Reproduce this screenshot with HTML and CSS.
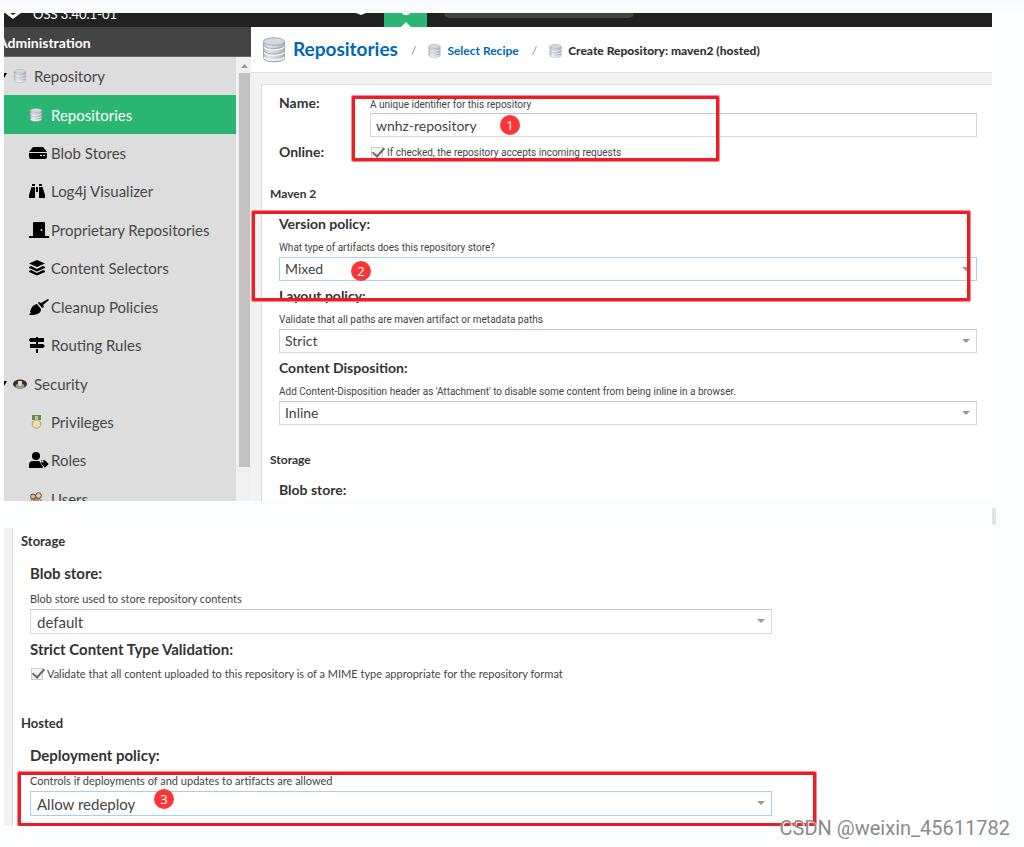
FILE: index.html
```html
<!DOCTYPE html>
<html lang="en">
<head>
<meta charset="utf-8">
<title>Create Repository: maven2 (hosted)</title>
<link rel="stylesheet" href="styles.css">
</head>
<body>
<svg class="sprite" aria-hidden="true">
  <defs>
    <linearGradient id="steel" x1="0" x2="1" y1="0" y2="0">
      <stop offset="0" stop-color="#b4b9c0"/><stop offset=".25" stop-color="#e6e9ed"/><stop offset=".6" stop-color="#ccd2d9"/><stop offset="1" stop-color="#a9afb7"/>
    </linearGradient>
    <symbol id="db" viewBox="0 0 24 26">
      <path d="M1.500 5v16c0 5 21 5 21 0V5z" fill="url(#steel)" stroke="#a0a5ac"/>
      <path d="M2 9.500c1 4 19 4 20 0M2 15c1 4 19 4 20 0M2 20c1 4 19 4 20 0" fill="none" stroke="#f6f8fa" stroke-width="1.500"/>
      <path d="M2 8.500c1 4 19 4 20 0M2 14c1 4 19 4 20 0" fill="none" stroke="#a0a6ae"/>
      <ellipse cx="12" cy="4.500" rx="10.500" ry="3.700" fill="#d5dae0" stroke="#a5aab1"/>
    </symbol>
  </defs>
</svg>
<main class="page">
  <section class="shot">
    <header class="topbar">
      <svg class="mark" viewBox="0 0 24 14"><path d="M0 -2 8 4 16 -2" transform="translate(1 0)" fill="none" stroke="#fff" stroke-width="3"/></svg>
      <span class="version">OSS 3.40.1-01</span>
      <svg class="cube" viewBox="0 0 12 14"><path d="M1 0 6 2 11 0z" fill="#fff"/></svg>
      <svg class="gear" viewBox="0 0 43 14"><path d="M0 0h43v14H0z" fill="#2bb573"/><path d="M18 0h8c-1 3-7 3-8 0M17 14l5-5 5 5z" fill="#fff"/></svg>
      <span class="search"></span>
    </header>
    <div class="columns">
      <aside class="sidebar">
        <h2 class="side-title">Administration</h2>
        <div class="tree-wrap">
          <ul class="tree">
            <li class="group"><svg class="caret" viewBox="0 0 4 6"><path d="M0 0h3L0 5z"/></svg><svg class="ico small"><use href="#db"/></svg><a href="#">Repository</a></li>
            <li class="selected"><svg class="ico small"><use href="#db"/></svg><a href="#">Repositories</a></li>
            <li><svg class="ico" viewBox="0 0 20 18"><path d="M4 3h10l4 5H0zM0 9h18v4q0 2-2 2H2q-2 0-2-2z"/><path d="M11 11h2v1h-2zM14 11h2v1h-2z" fill="#ddd"/></svg><a href="#">Blob Stores</a></li>
            <li><svg class="ico" viewBox="0 0 20 18"><path d="M3 2h3v2H3zM10 2h3v2h-3zM2.500 5H6v11H0v-3zM10 5h3.500L16 13v3h-6zM7 5h2v5H7z"/></svg><a href="#">Log4j Visualizer</a></li>
            <li><svg class="ico" viewBox="0 0 20 18"><path d="M4 1.500 5 1h10l1 .500V15h4v2H0v-2h4z"/><circle cx="12.500" cy="9" r="1" fill="#ddd"/></svg><a href="#">Proprietary Repositories</a></li>
            <li><svg class="ico" viewBox="0 0 20 18"><path d="m8 1 8 3.500L8 8 0 4.500zM0 8l2-1 6 3 6-3 2 1v1l-8 3.500L0 9zM0 12l2-1 6 3 6-3 2 1v1l-8 3.500L0 13z"/></svg><a href="#">Content Selectors</a></li>
            <li><svg class="ico" viewBox="0 0 20 18"><path d="m19 1 1 1-6 5 1 2-2 1-4-5 1-1 2 1zM8 6l4 5c0 4-3 6-12 6l2-3H1l1-3c2-4 3-4 6-5"/></svg><a href="#">Cleanup Policies</a></li>
            <li><svg class="ico" viewBox="0 0 20 18"><path d="M7 1h2v1h6v4H1L0 4l1-2h6zM7 6h2v2H7zM1 8h13l2 2-2 2H1zM7 13h2v4H7z"/></svg><a href="#">Routing Rules</a></li>
            <li class="group"><svg class="caret" viewBox="0 0 4 6"><path d="M0 0h3L0 5z"/></svg><svg class="ico small" viewBox="0 0 14 14"><ellipse cx="7" cy="7" rx="7" ry="4.500" fill="#333"/><ellipse cx="7" cy="9" rx="4.500" ry="2.500" fill="#999"/><path d="M5 4h4v3L8 9H6L5 7z" fill="#e8d9a0"/></svg><a href="#">Security</a></li>
            <li><svg class="ico small" viewBox="0 0 14 14"><path d="M3 0h9v5H3z" fill="#638b4c"/><path d="M6 1h3v4H6z" fill="#b8cfa5"/><circle cx="7.500" cy="9" r="4.300" fill="#efdcae" stroke="#b39a68"/></svg><a href="#">Privileges</a></li>
            <li><svg class="ico" viewBox="0 0 20 18"><circle cx="7" cy="5" r="4"/><path d="M0 17v-3q0-4 4-4h6l3 3 1 4z"/><path d="M12 9h4l4 4-4 4-4-4z" stroke="#ddd" stroke-width=".6"/><circle cx="13.500" cy="10.500" r="1" fill="#ddd"/></svg><a href="#">Roles</a></li>
            <li><svg class="ico small" viewBox="0 0 14 14"><path d="M1 14V9l2-3h8l3 4v4z" fill="#a98f62"/><circle cx="4" cy="4.500" r="2.500" fill="#d9bd93" stroke="#594a36"/><circle cx="9.500" cy="3.500" r="2.800" fill="#e5cba4" stroke="#594a36"/><path d="m3 8 2 5M10 8v5" stroke="#eee"/></svg><a href="#">Users</a></li>
          </ul>
          <div class="scroll"><svg class="up" viewBox="0 0 7 4"><path d="M0 4 3.500 0 7 4z" fill="#999"/></svg><span class="thumb"></span></div>
        </div>
      </aside>
      <div class="content">
        <nav class="crumbs">
          <svg class="db-large"><use href="#db"/></svg><a class="root" href="#">Repositories</a>
          <i>/</i><svg class="db-small"><use href="#db"/></svg><a href="#">Select Recipe</a>
          <i>/</i><svg class="db-small"><use href="#db"/></svg><b>Create Repository: maven2 (hosted)</b>
        </nav>
        <form class="form">
          <div class="line top">
            <label class="label" for="name">Name:</label>
            <div class="control"><p class="help">A unique identifier for this repository</p><input class="box" id="name" type="text" value="wnhz-repository"></div>
          </div>
          <div class="line">
            <span class="label">Online:</span>
            <label class="check"><input type="checkbox" checked>If checked, the repository accepts incoming requests</label>
          </div>
          <h3>Maven 2</h3>
          <div class="field"><label class="label" for="version">Version policy:</label><p class="help">What type of artifacts does this repository store?</p><div class="pick focus"><select class="box" id="version"><option>Mixed</option></select></div></div>
          <div class="field"><label class="label" for="layout">Layout policy:</label><p class="help">Validate that all paths are maven artifact or metadata paths</p><div class="pick"><select class="box" id="layout"><option>Strict</option></select></div></div>
          <div class="field"><label class="label" for="disposition">Content Disposition:</label><p class="help">Add Content-Disposition header as 'Attachment' to disable some content from being inline in a browser.</p><div class="pick"><select class="box" id="disposition"><option>Inline</option></select></div></div>
          <h3 class="storage">Storage</h3>
          <div class="field"><span class="label">Blob store:</span></div>
        </form>
      </div>
    </div>
    <div class="frame frame-name"></div><span class="pin pin-1">1</span>
    <div class="frame frame-version"></div><span class="pin pin-2">2</span>
  </section>
  <div class="between"><span></span></div>
  <section class="shot second">
    <form class="form large">
      <h3>Storage</h3>
      <div class="field"><label class="label" for="blob">Blob store:</label><p class="help">Blob store used to store repository contents</p><div class="pick"><select class="box" id="blob"><option>default</option></select></div></div>
      <div class="field"><span class="label">Strict Content Type Validation:</span><label class="check"><input type="checkbox" checked>Validate that all content uploaded to this repository is of a MIME type appropriate for the repository format</label></div>
      <h3 class="hosted">Hosted</h3>
      <div class="field"><label class="label" for="deploy">Deployment policy:</label><p class="help">Controls if deployments of and updates to artifacts are allowed</p><div class="pick focus"><select class="box" id="deploy"><option>Allow redeploy</option></select></div></div>
    </form>
    <div class="frame frame-deploy"></div><span class="pin pin-3">3</span>
  </section>
  <div class="watermark">CSDN @weixin_45611782</div>
</main>
</body>
</html>
```
FILE: styles.css
```css
* { box-sizing: border-box; }
body { margin: 0; background: #fcfdff; color: #333; font: 15px/20px Lato, "Open Sans", sans-serif; }
h2, h3, p, ul { margin: 0; padding: 0; }
a { color: inherit; text-decoration: none; }
.sprite { position: absolute; width: 0; height: 0; }
.page { position: relative; padding: 13px 32px 21px 4px; background: linear-gradient(#f8fafd, #fcfdff 14px); }
.shot { position: relative; height: 488px; overflow: hidden; background: #fff; }

.topbar { display: flex; height: 14px; background: #222; color: #fff; overflow: hidden; }
.mark { flex: none; width: 24px; height: 14px; }
.version { width: 322px; margin: -9px 0 0 5px; font-size: 13px; }
.cube { width: 12px; height: 14px; margin-right: 17px; flex: none; }
.gear { width: 43px; height: 14px; flex: none; }
.search { width: 190px; height: 5px; margin-left: 17px; background: #444; border-radius: 0 0 8px 8px; }

.columns { display: flex; height: 474px; }
.sidebar { flex: none; width: 247px; background: #f0f0f0; }
.side-title { height: 30px; background: #444; color: #fff; font-size: 14px; line-height: 31px; text-indent: -6px; border-bottom: 1px solid #666; }
.tree-wrap { display: flex; height: 444px; overflow: hidden; }
.tree { flex: 1; display: grid; grid-auto-rows: 1fr; height: 461px; list-style: none; background: #ddd; color: #484848; font-size: 15px; }
.tree li { display: flex; align-items: center; padding-left: 25px; }
.tree .group { padding-left: 0; }
.tree .selected { background: #2bb573; color: #fff; }
.caret { width: 4px; height: 6px; margin-right: 5px; }
.ico { width: 20px; height: 18px; margin-right: 2px; }
.ico.small { width: 14px; height: 14px; margin: 0 8px 0 0; }
.group .ico.small { margin-right: 7px; }
.scroll { width: 15px; padding-left: 2px; display: flex; flex-direction: column; align-items: center; }
.up { width: 7px; height: 4px; margin: 7px 0 5px; }
.thumb { width: 11px; height: 394px; background: #c1c1c1; }

.content { flex: 1; background: #f3f3f3; }
.crumbs { display: flex; align-items: center; height: 46px; padding: 2px 0 0 11px; background: #fff; border-bottom: 1px solid #e0e0e0; font-size: 12px; font-weight: 700; color: #333; }
.crumbs a { color: #0068b8; }
.crumbs .root { font-size: 19px; padding-bottom: 3px; }
.crumbs i { margin: 0 12px 0 13px; color: #888; font-weight: 400; font-style: normal; }
.db-large { width: 24px; height: 26px; margin: 0 7px 2px 0; }
.db-small { width: 13px; height: 14px; margin-right: 6px; }

.form { margin: 11px 0 0 10px; padding: 8px 15px 0 8px; background: #fff; border: 1px solid #ddd; border-right: 0; height: 430px; }
.form h3 { font-size: 12px; line-height: 20px; margin: 22px 0 10px; }
.form .storage { margin: 25px 0 10px; }
.line { display: flex; align-items: center; margin-left: 9px; }
.line.top { align-items: flex-start; margin-bottom: 5px; }
.line > .label { width: 91px; flex: none; }
.control { flex: 1; }
.label { display: block; font-size: 14px; font-weight: 700; line-height: 20px; }
.help { color: #444; font: 10px/16px Roboto, sans-serif; }
.control .help { padding-top: 4px; }
.field { margin-left: 9px; }
.field .help { margin: 6px 0 1px; }
.field + .field { margin-top: 5px; }
.box { display: block; width: 100%; height: 24px; margin: 0; padding: 0 5px; border: 1px solid #d9d9d9; border-top-color: #c4c4c4; border-radius: 0; background: #fff; color: #444; font: 14px/20px Lato, sans-serif; appearance: none; outline: 0; }
.pick { position: relative; }
.pick::after { content: ""; position: absolute; right: 7px; top: 10px; border: 4px solid transparent; border-top-color: #999; border-bottom: 0; }
.focus .box { border-color: #a5d0ee; }
.check { display: flex; align-items: center; padding-top: 2px; color: #444; font: 10px/16px Roboto, sans-serif; }
.check input { appearance: none; width: 12px; height: 12px; margin: 0 4px 0 1px; border: 1px solid #ccc; background: #f4f4f4; position: relative; }
.check input::after { content: ""; position: absolute; left: 3px; top: -3px; width: 5px; height: 10px; border: solid #666; border-width: 0 2px 2px 0; transform: rotate(42deg); }

.between { display: flex; justify-content: flex-end; height: 27px; margin-right: -4px; padding-top: 7px; }
.between span { width: 4px; height: 17px; background: #dfe4e4; border-radius: 1px; }

.second { height: 298px; padding-left: 8px; background: linear-gradient(90deg, #f3f3f3 8px, #fff 8px); }
.large { margin: 0; height: 298px; padding: 3px 220px 0 8px; border-width: 0 0 0 1px; }
.large h3 { margin: 0 0 12px; font-size: 13px; }
.large .hosted { margin: 31px 0 12px; }
.large .label { font-size: 15px; }
.large .help { margin: 8px 0 2px; font: 11px/16px Lato, sans-serif; }
.large .box { height: 25px; padding: 0 6px; font-size: 15px; }
.large .field + .field { margin-top: 5px; }
.large .check { margin-top: 5px; font: 11px/16px Lato, sans-serif; }

.frame { position: absolute; border: 3px solid #ee1c25; border-radius: 1px; box-shadow: 0 0 0 1px #f58b90; }
.frame-name { left: 348px; top: 83px; width: 367px; height: 65px; }
.frame-version { left: 248px; top: 198px; width: 718px; height: 90px; }
.frame-deploy { left: 14px; top: 244px; width: 798px; height: 54px; }
.pin { position: absolute; width: 20px; height: 20px; border-radius: 50%; background: #fc3637; color: #fff; font: 13px/20px "Open Sans", sans-serif; text-align: center; }
.pin-1 { left: 496px; top: 102px; }
.pin-2 { left: 347px; top: 248px; }
.pin-3 { left: 150px; top: 261px; }
.watermark { position: absolute; right: 14px; bottom: 7px; color: #8b8b8b; font: 20px/24px Roboto, sans-serif; text-shadow: 1px 1px 0 #fff; }
```
